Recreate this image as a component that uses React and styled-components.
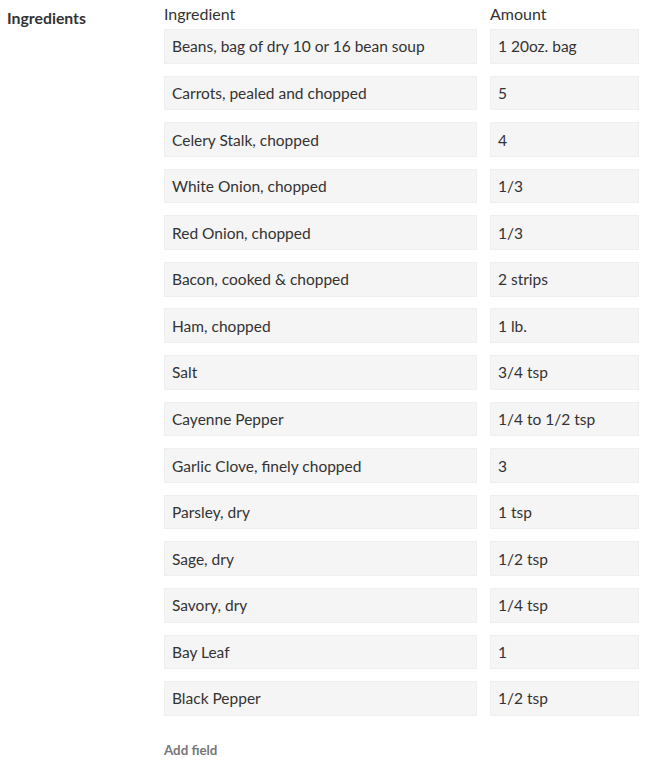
import React from "react";
import styled, { createGlobalStyle } from "styled-components";

const GlobalStyle = createGlobalStyle`
  body {
    margin: 0;
    background: #fff;
    font-family: Lato, "Open Sans", sans-serif;
    color: #333;
  }
`;

const Page = styled.div`
  display: flex;
  padding: 0 0 0 7px;
  width: 650px;
  box-sizing: border-box;
`;

const Label = styled.div`
  width: 157px;
  flex-shrink: 0;
  font-weight: 700;
  font-size: 15.8px;
  line-height: 20px;
  padding-top: 8px;
  color: #333;
`;

const Table = styled.div`
  display: grid;
  grid-template-columns: 313px 149px;
  column-gap: 13px;
  row-gap: 11.9px;
  align-content: start;
`;

const Head = styled.div`
  font-size: 16px;
  line-height: 20px;
  height: 29px;
  padding-top: 4px;
  box-sizing: border-box;
  margin-bottom: -11.9px;
  color: #333;
`;

const Cell = styled.div`
  height: 34.7px;
  box-sizing: border-box;
  background: #f5f5f5;
  border: 1px solid #efefef;
  display: flex;
  align-items: center;
  padding-left: 7px;
  font-size: 15.5px;
  color: #333;
`;

const AddField = styled.div`
  grid-column: 1 / span 2;
  margin-top: 14px;
  font-size: 13.3px;
  font-weight: 700;
  color: #777;
`;

const rows = [
  ["Beans, bag of dry 10 or 16 bean soup", "1 20oz. bag"],
  ["Carrots, pealed and chopped", "5"],
  ["Celery Stalk, chopped", "4"],
  ["White Onion, chopped", "1/3"],
  ["Red Onion, chopped", "1/3"],
  ["Bacon, cooked & chopped", "2 strips"],
  ["Ham, chopped", "1 lb."],
  ["Salt", "3/4 tsp"],
  ["Cayenne Pepper", "1/4 to 1/2 tsp"],
  ["Garlic Clove, finely chopped", "3"],
  ["Parsley, dry", "1 tsp"],
  ["Sage, dry", "1/2 tsp"],
  ["Savory, dry", "1/4 tsp"],
  ["Bay Leaf", "1"],
  ["Black Pepper", "1/2 tsp"],
];

export default function App() {
  return (
    <>
      <GlobalStyle />
      <Page>
        <Label>Ingredients</Label>
        <Table>
          <Head>Ingredient</Head>
          <Head>Amount</Head>
          {rows.map(([name, amount]) => (
            <React.Fragment key={name}>
              <Cell>{name}</Cell>
              <Cell>{amount}</Cell>
            </React.Fragment>
          ))}
          <AddField>Add field</AddField>
        </Table>
      </Page>
    </>
  );
}
